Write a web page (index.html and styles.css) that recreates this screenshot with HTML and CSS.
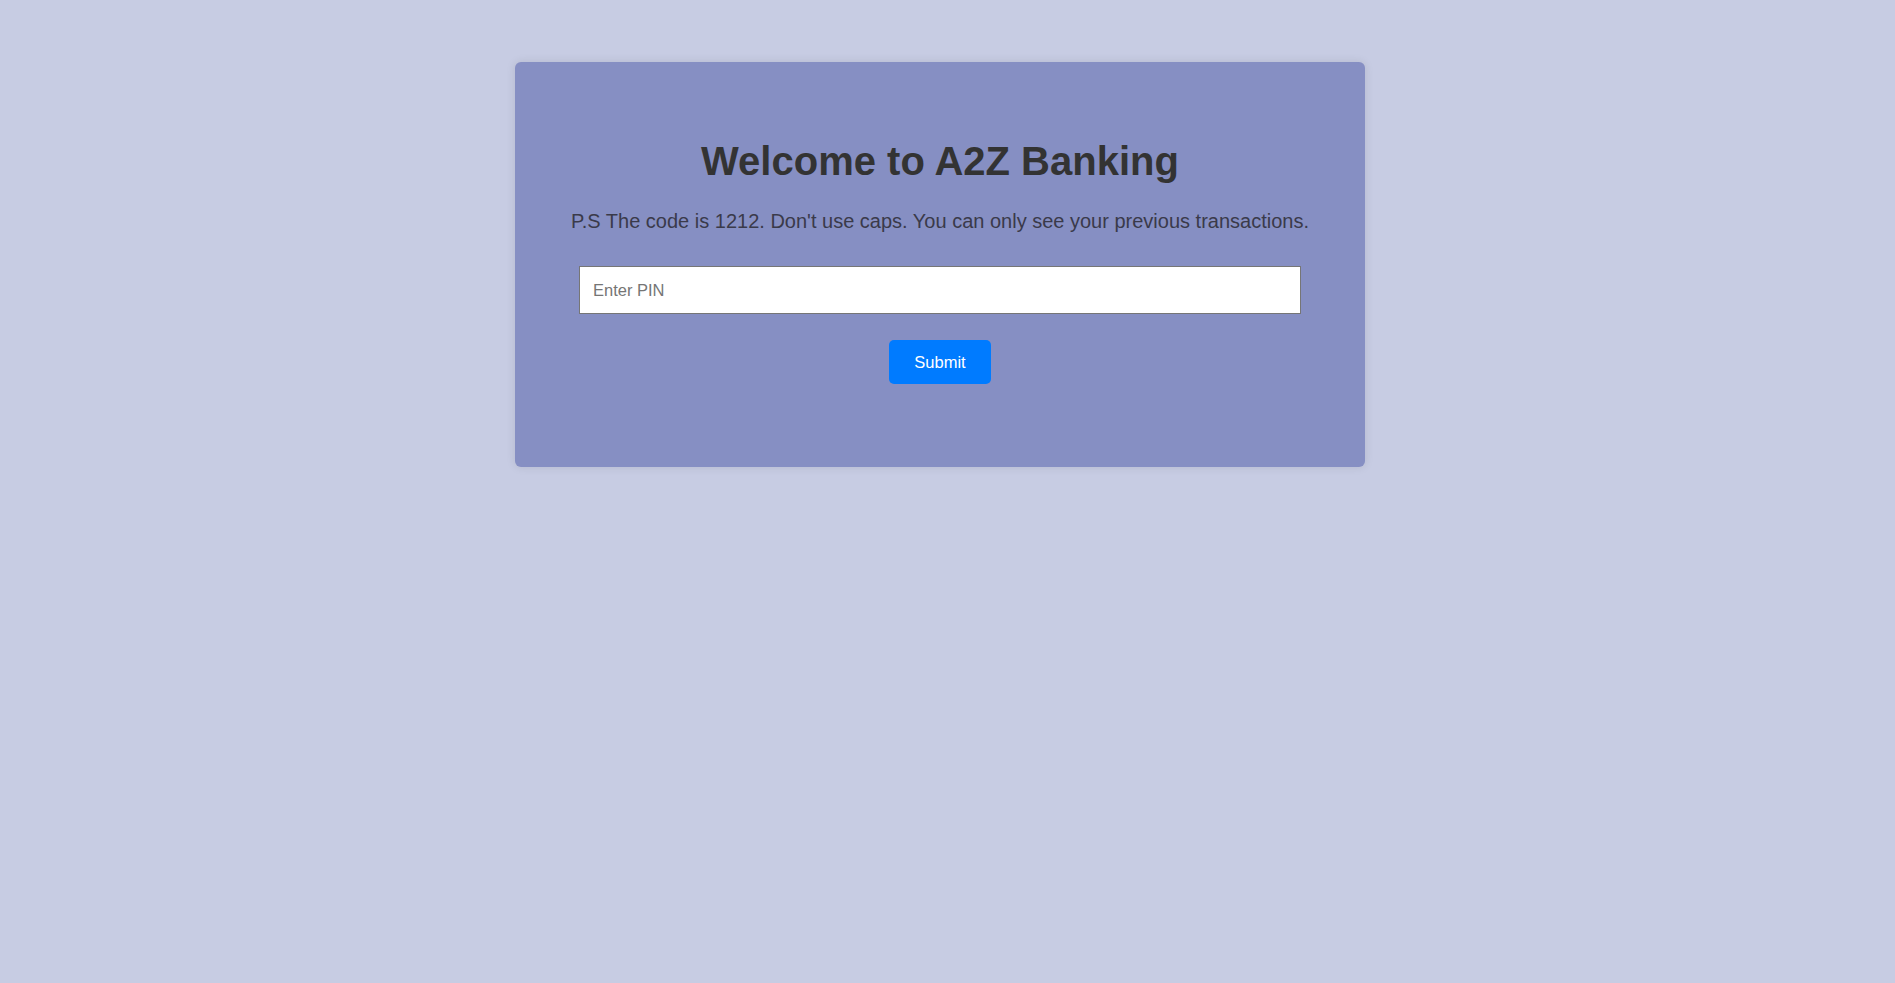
FILE: index.html
```html
<!DOCTYPE html>
<html>
<head>
<meta charset="utf-8">
<title>A2Z Banking</title>
<link rel="stylesheet" href="styles.css">
</head>
<body>
<div class="page">
  <div class="card">
    <h1 class="title">Welcome to A2Z Banking</h1>
    <p class="note">P.S The code is 1212. Don't use caps. You can only see your previous transactions.</p>
    <input class="pin" type="password" placeholder="Enter PIN">
    <button class="submit" type="button">Submit</button>
  </div>
</div>
</body>
</html>
```
FILE: styles.css
```css
html, body {
  margin: 0;
  padding: 0;
}
body {
  background: #c7cce3;
  font-family: "Liberation Sans", Arial, sans-serif;
  min-height: 100vh;
}
.page {
  display: flex;
  justify-content: center;
  padding-top: 62px;
  padding-right: 15px;
}
.card {
  width: 850px;
  box-sizing: border-box;
  height: 405px;
  background: #868fc3;
  border-radius: 6px;
  box-shadow: 0 0 10px rgba(0, 0, 0, 0.1);
  display: flex;
  flex-direction: column;
  align-items: center;
  padding-top: 76px;
}
.title {
  margin: 0;
  font-size: 40px;
  line-height: 46px;
  font-weight: bold;
  color: #333333;
}
.note {
  margin: 26px 0 0;
  font-size: 20px;
  line-height: 23px;
  color: #3a3a4a;
}
.pin {
  margin-top: 33px;
  width: 722px;
  height: 48px;
  box-sizing: border-box;
  border: 1px solid #767676;
  padding: 0 13px;
  font-family: "Liberation Sans", Arial, sans-serif;
  font-size: 16.5px;
  background: #ffffff;
  outline: none;
}
.pin::placeholder {
  color: #757575;
}
.submit {
  margin-top: 26px;
  width: 102px;
  height: 44px;
  border: none;
  border-radius: 5px;
  background: #007bff;
  color: #ffffff;
  font-family: "Liberation Sans", Arial, sans-serif;
  font-size: 16.5px;
  cursor: pointer;
}
```
